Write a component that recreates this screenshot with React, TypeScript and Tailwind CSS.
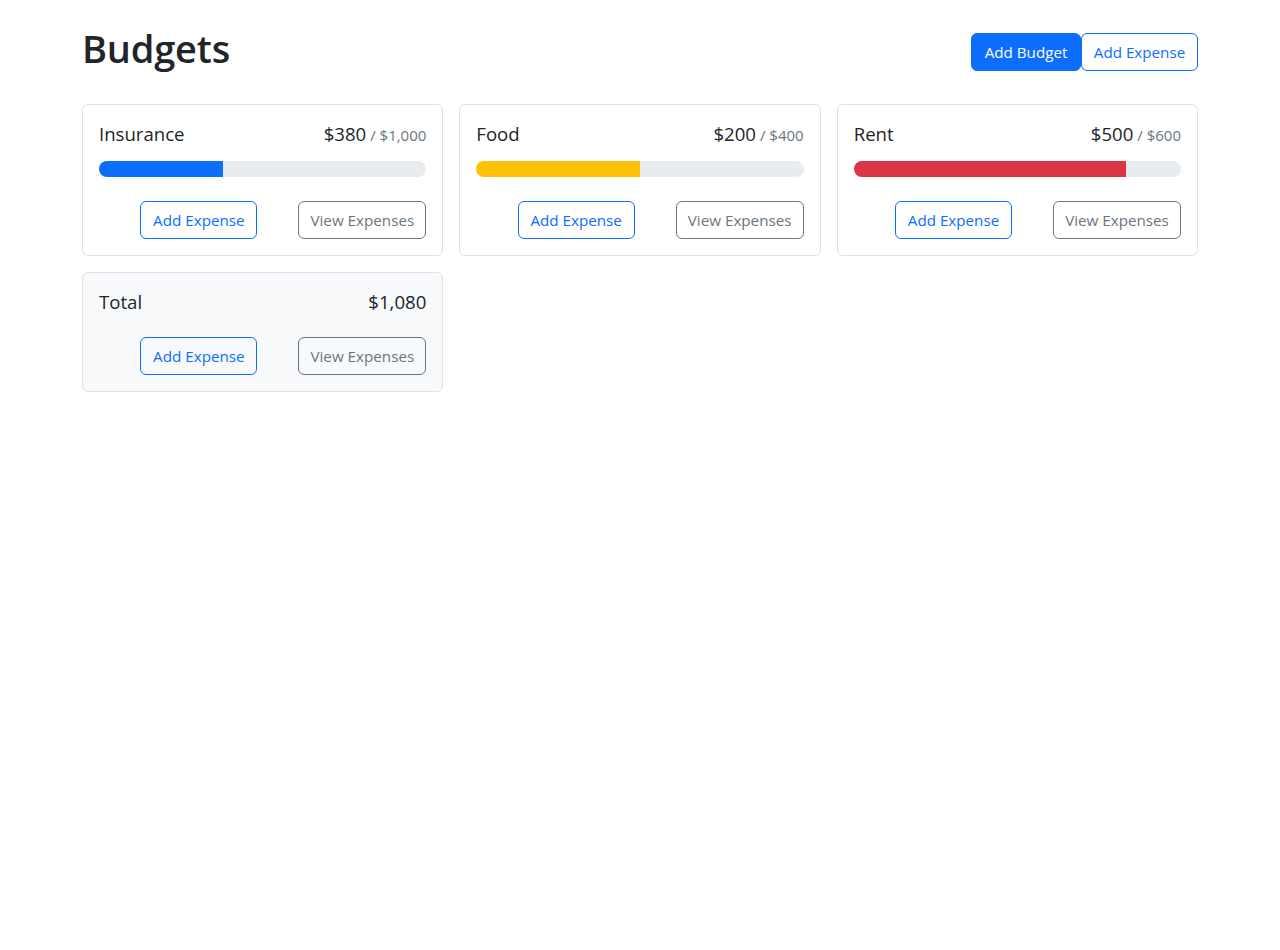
import React from "react";

type Budget = { name: string; amount: number; max: number; bar: string };

const budgets: Budget[] = [
  { name: "Insurance", amount: 380, max: 1000, bar: "bg-[#0d6efd]" },
  { name: "Food", amount: 200, max: 400, bar: "bg-[#ffc107]" },
  { name: "Rent", amount: 500, max: 600, bar: "bg-[#dc3545]" },
];

const fmt = (n: number) => "$" + n.toLocaleString("en-US");

function Buttons() {
  return (
    <div className="flex items-center mt-6">
      <button className="ml-auto w-[117px] h-[38px] rounded-[6px] border border-[#0d6efd] text-[#0d6efd] bg-transparent text-[15.2px] leading-6 whitespace-nowrap">
        Add Expense
      </button>
      <button className="ml-[41px] w-[128px] h-[38px] rounded-[6px] border border-[#6c757d] text-[#6c757d] bg-transparent text-[15.2px] leading-6 whitespace-nowrap">
        View Expenses
      </button>
    </div>
  );
}

function Card({ b }: { b: Budget }) {
  const pct = Math.min(100, (b.amount / b.max) * 100);
  return (
    <div className="border border-[#dee2e6] rounded-[6px] bg-white p-4">
      <div className="flex justify-between items-baseline h-6 mb-4 text-[18.6px] leading-[26px] text-[#212529]">
        <div className="mr-2">{b.name}</div>
        <div className="flex items-baseline">
          {fmt(b.amount)}
          <span className="text-[#6c757d] text-[15px] ml-1">/ {fmt(b.max)}</span>
        </div>
      </div>
      <div className="h-4 rounded-full bg-[#e9ecef] overflow-hidden flex">
        <div className={`h-full ${b.bar}`} style={{ width: `${pct}%` }} />
      </div>
      <Buttons />
    </div>
  );
}

export default function App() {
  const total = budgets.reduce((s, b) => s + b.amount, 0);
  return (
    <div
      className="min-h-[950px] bg-white text-[#212529]"
      style={{ fontFamily: '"Open Sans", "Noto Sans", sans-serif' }}
    >
      <div className="max-w-[1140px] mx-auto px-3 py-6">
        <div className="flex items-center mb-6">
          <h1 className="mr-auto text-[38px] leading-[48px] font-semibold mb-2 tracking-[-0.2px]">Budgets</h1>
          <button className="w-[110px] h-[38px] rounded-[6px] border border-[#0d6efd] bg-[#0d6efd] text-white text-[15.2px] leading-6 whitespace-nowrap">
            Add Budget
          </button>
          <button className="w-[117px] h-[38px] rounded-[6px] border border-[#0d6efd] text-[#0d6efd] bg-white text-[15.2px] leading-6 whitespace-nowrap">
            Add Expense
          </button>
        </div>
        <div className="grid grid-cols-3 gap-4 items-start">
          {budgets.map((b) => (
            <Card key={b.name} b={b} />
          ))}
          <div className="border border-[#dee2e6] rounded-[6px] bg-[#f8f9fa] p-4">
            <div className="flex justify-between items-baseline h-6 text-[18.6px] leading-[26px] text-[#212529]">
              <div className="mr-2">Total</div>
              <div>{fmt(total)}</div>
            </div>
            <Buttons />
          </div>
        </div>
      </div>
    </div>
  );
}
